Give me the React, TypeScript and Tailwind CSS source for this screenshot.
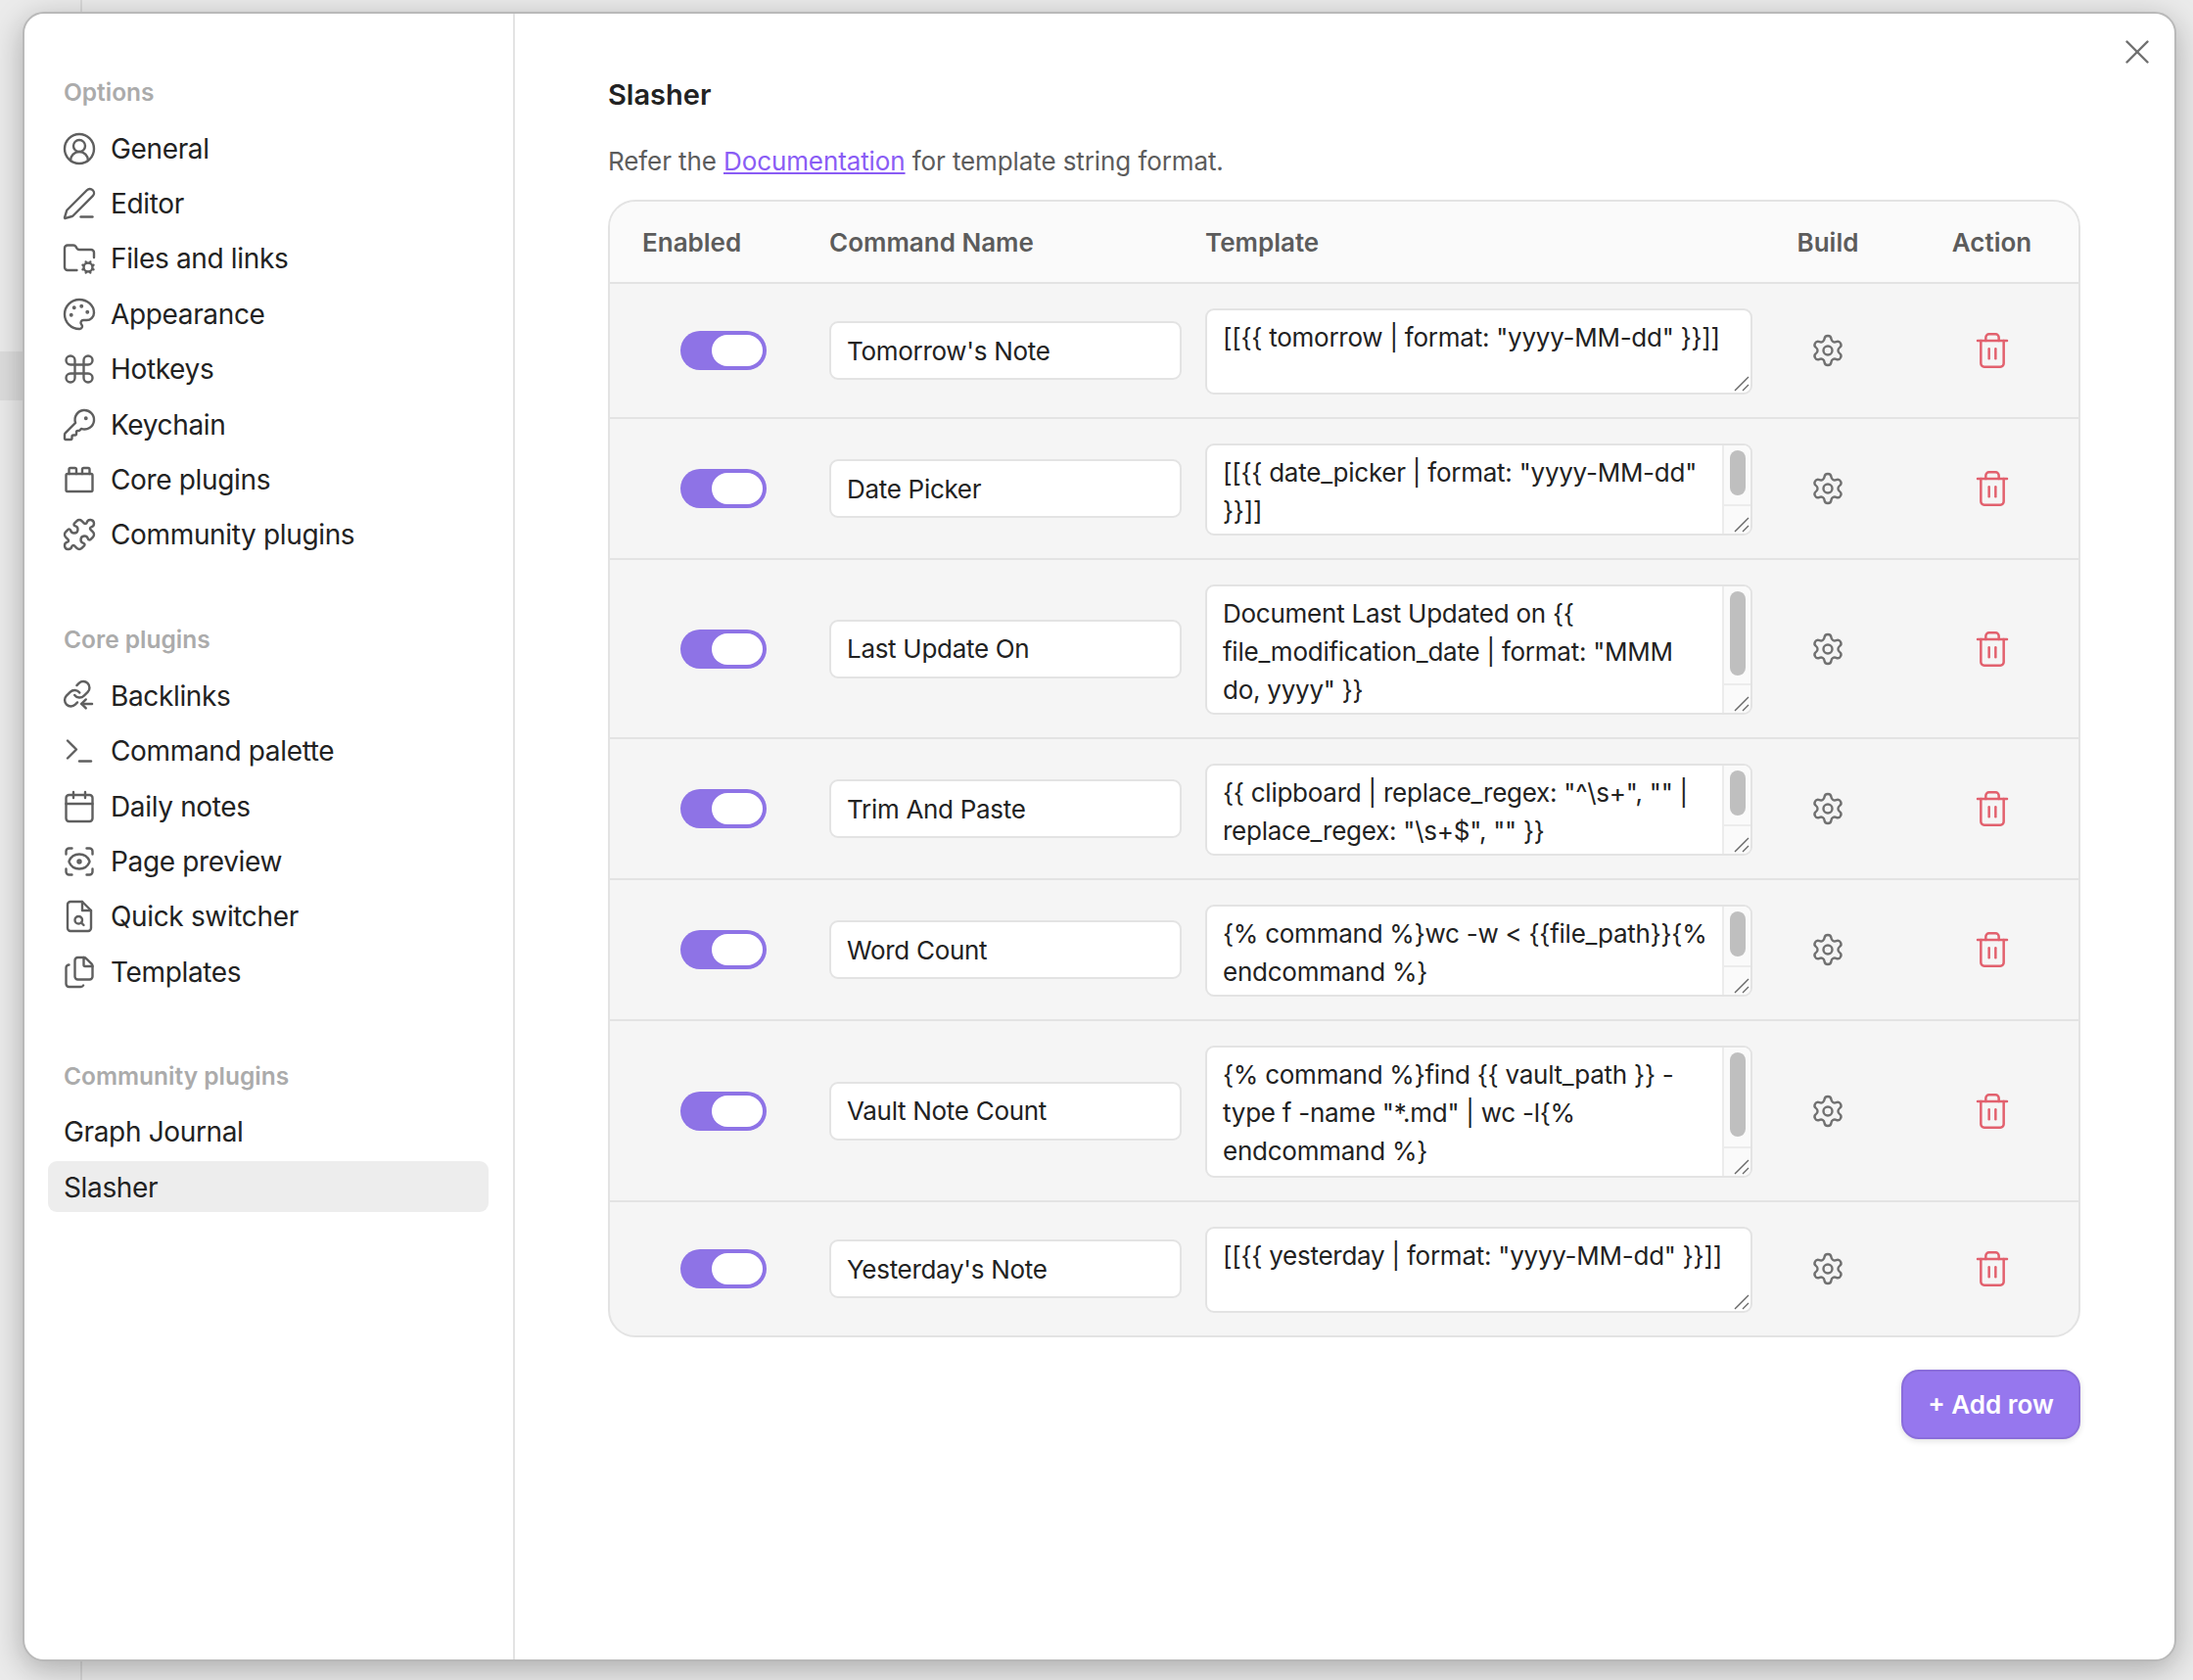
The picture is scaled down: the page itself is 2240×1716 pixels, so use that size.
import {
  CircleUserRound, PenLine, FolderCog, Palette, Command, KeyRound, ToyBrick, Puzzle,
  Terminal, Calendar, ScanEye, Files, Settings, Trash2, X,
} from "lucide-react";
import type { ReactNode } from "react";

function BacklinksIcon() {
  return (
    <svg width="36" height="36" viewBox="0 0 24 24" fill="none" stroke="currentColor" strokeWidth="1.6" strokeLinecap="round" strokeLinejoin="round">
      <g transform="translate(0.3 0.3) scale(0.85)">
        <path d="M10 13a5 5 0 0 0 7.54.54l3-3a5 5 0 0 0-7.07-7.07l-1.72 1.71" strokeWidth="1.9" />
        <path d="M14 11a5 5 0 0 0-7.54-.54l-3 3a5 5 0 0 0 7.07 7.07l1.71-1.71" strokeWidth="1.9" />
      </g>
      <path d="M20.7 17.3h-7.2" />
      <path d="m16.5 14.3-3 3 3 3" />
    </svg>
  );
}

function QuickSwitcherIcon() {
  return (
    <svg width="36" height="36" viewBox="0 0 24 24" fill="none" stroke="currentColor" strokeWidth="1.6" strokeLinecap="round" strokeLinejoin="round">
      <path d="M14 2H6a2 2 0 0 0-2 2v16a2 2 0 0 0 2 2h12a2 2 0 0 0 2-2V8z" />
      <path d="M14 2v6h6" />
      <circle cx="11.5" cy="14.5" r="2.5" />
      <path d="M13.3 16.3 15 18" />
    </svg>
  );
}

const ic = { size: 36, strokeWidth: 1.6 };

type NavItem = { label: string; icon?: ReactNode; active?: boolean };

const options: NavItem[] = [
  { label: "General", icon: <CircleUserRound {...ic} /> },
  { label: "Editor", icon: <PenLine {...ic} /> },
  { label: "Files and links", icon: <FolderCog {...ic} /> },
  { label: "Appearance", icon: <Palette {...ic} /> },
  { label: "Hotkeys", icon: <Command {...ic} /> },
  { label: "Keychain", icon: <KeyRound {...ic} /> },
  { label: "Core plugins", icon: <ToyBrick {...ic} /> },
  { label: "Community plugins", icon: <Puzzle {...ic} /> },
];
const core: NavItem[] = [
  { label: "Backlinks", icon: <BacklinksIcon /> },
  { label: "Command palette", icon: <Terminal {...ic} /> },
  { label: "Daily notes", icon: <Calendar {...ic} /> },
  { label: "Page preview", icon: <ScanEye {...ic} /> },
  { label: "Quick switcher", icon: <QuickSwitcherIcon /> },
  { label: "Templates", icon: <Files {...ic} /> },
];
const community: NavItem[] = [
  { label: "Graph Journal" },
  { label: "Slasher", active: true },
];

function NavGroup({ title, items, className, headClass }: { title: string; items: NavItem[]; className?: string; headClass: string }) {
  return (
    <div className={className}>
      <div className={`h-[40px] pl-[16px] flex items-center text-[24.5px] font-semibold text-[#ababab] ${headClass}`}>{title}</div>
      {items.map((it) => (
        <div key={it.label} className="h-[56.4px] py-[2px]">
          <div className={`h-full pt-[1px] flex items-center rounded-[9px] text-[28px] tracking-[-0.35px] text-[#222222] ${it.active ? "bg-[#ededed]" : ""} ${it.icon ? "pl-[14px] gap-[14px]" : "pl-[16px]"}`}>
            {it.icon ? <span className="w-[36px] h-[36px] flex items-center justify-center text-[#5f5f5f]">{it.icon}</span> : null}
            <span>{it.label}</span>
          </div>
        </div>
      ))}
    </div>
  );
}

type Row = { name: string; lines: string[]; taClass: string; thumbClass?: string };

const rows: Row[] = [
  { name: "Tomorrow's Note", lines: ['[[{{ tomorrow | format: "yyyy-MM-dd" }}]]'], taClass: "h-[88px]" },
  { name: "Date Picker", lines: ['[[{{ date_picker | format: "yyyy-MM-dd"', "}}]]"], taClass: "h-[94px]", thumbClass: "h-[46px]" },
  { name: "Last Update On", lines: ["Document Last Updated on {{", 'file_modification_date | format: "MMM', 'do, yyyy" }}'], taClass: "h-[133px]", thumbClass: "h-[86px]" },
  { name: "Trim And Paste", lines: ['{{ clipboard | replace_regex: "^\\s+", "" |', 'replace_regex: "\\s+$", "" }}'], taClass: "h-[94px]", thumbClass: "h-[46px]" },
  { name: "Word Count", lines: ["{% command %}wc -w < {{file_path}}{%", "endcommand %}"], taClass: "h-[94px]", thumbClass: "h-[46px]" },
  { name: "Vault Note Count", lines: ["{% command %}find {{ vault_path }} -", 'type f -name "*.md" | wc -l{%', "endcommand %}"], taClass: "h-[135px]", thumbClass: "h-[86px]" },
  { name: "Yesterday's Note", lines: ['[[{{ yesterday | format: "yyyy-MM-dd" }}]]'], taClass: "h-[88px]" },
];

function Grip({ className }: { className: string }) {
  return (
    <svg className={className} width="16" height="16" viewBox="0 0 16 16" fill="none" stroke="#666666" strokeWidth="1.3">
      <path d="M1 15 15 1" />
      <path d="M9 15 15 9" />
    </svg>
  );
}

function TemplateBox({ row }: { row: Row }) {
  return (
    <div className={`${row.taClass} relative flex rounded-[9px] border-2 border-[#e3e3e3] bg-white overflow-hidden`}>
      <div className="flex-1 min-w-0 pl-[16px] pt-[8px] text-[26px] tracking-[-0.25px] leading-[39px] text-[#222222] whitespace-nowrap">
        {row.lines.map((l) => (
          <div key={l}>{l}</div>
        ))}
      </div>
      {row.thumbClass ? (
        <div className="w-[29px] shrink-0 flex flex-col bg-[#fafafa] border-l-2 border-[#ececec]">
          <div className="flex-1 min-h-0 pt-[5px] pl-[6px]">
            <div className={`${row.thumbClass} w-[16px] rounded-full bg-[#bfbfbf]`} />
          </div>
          <div className="h-[30px] shrink-0 relative border-t-2 border-[#ececec]">
            <Grip className="absolute right-[1px] bottom-[1px]" />
          </div>
        </div>
      ) : (
        <Grip className="absolute right-[1px] bottom-[1px]" />
      )}
    </div>
  );
}

export default function App() {
  return (
    <div className="relative w-[2240px] h-[1716px] overflow-hidden bg-[#ebebeb] pl-[23px] pt-[12px] font-['Inter',sans-serif]">
      <div className="absolute left-[82px] top-0 w-[2px] h-full bg-[#d8d8d8]" />
      <div className="absolute left-0 top-[359px] w-[24px] h-[50px] bg-[#dddddd]" />
      <div className="relative flex w-[2200px] h-[1685px] rounded-[22px] border-2 border-[#b9b9b9] bg-white shadow-[0_8px_32px_rgba(0,0,0,0.28)]">
        <aside className="w-[501px] shrink-0 border-r-2 border-[#e3e3e3] pl-[24px] pr-[25px] pt-[60px]">
          <NavGroup title="Options" items={options} headClass="mb-[9px]" />
          <NavGroup title="Core plugins" items={core} className="mt-[59px]" headClass="mb-[9px]" />
          <NavGroup title="Community plugins" items={community} className="mt-[59px]" headClass="mb-[8px]" />
        </aside>
        <main className="flex-1 min-w-0 pl-[95px] pr-[96px] pt-[64px]">
          <h1 className="h-[38px] leading-[38px] text-[29px] font-semibold text-[#222222]">Slasher</h1>
          <p className="mt-[29px] h-[40px] leading-[40px] text-[26px] tracking-[-0.1px] text-[#5c5c5c]">
            Refer the <a className="text-[#8a5cf5] underline">Documentation</a> for template string format.
          </p>
          <div className="mt-[19px] rounded-[28px] border-2 border-[#e3e3e3] overflow-hidden bg-[#f5f5f5]">
            <div className="grid grid-cols-[224px_384px_559px_154px_1fr] items-center h-[84px] bg-[#fafafa] border-b-2 border-[#e3e3e3] text-[26px] font-semibold text-[#5c5c5c]">
              <div className="pl-[33px]">Enabled</div>
              <div>Command Name</div>
              <div>Template</div>
              <div className="text-center">Build</div>
              <div className="text-center pl-[2px]">Action</div>
            </div>
            {rows.map((row, i) => (
              <div
                key={row.name}
                className={`grid grid-cols-[224px_384px_559px_154px_1fr] items-center pt-[25px] pb-[23px] ${i < rows.length - 1 ? "border-b-2 border-[#e3e3e3]" : ""}`}
              >
                <div className="pl-[72px] mb-[2px]">
                  <div className="w-[88px] h-[40px] rounded-full bg-[#8e73e6] flex items-center justify-end pr-[4px]">
                    <div className="w-[52px] h-[32px] rounded-full bg-white" />
                  </div>
                </div>
                <div className="w-[360px] h-[60px] mb-[2px] rounded-[9px] border-2 border-[#e3e3e3] bg-white flex items-center pl-[16px] text-[26px] tracking-[-0.3px] text-[#222222]">
                  {row.name}
                </div>
                <TemplateBox row={row} />
                <div className="flex justify-center mb-[2px] text-[#707070]">
                  <Settings size={36} strokeWidth={1.6} />
                </div>
                <div className="flex justify-center mb-[2px] pl-[2px] text-[#e2616e]">
                  <Trash2 size={40} strokeWidth={1.5} />
                </div>
              </div>
            ))}
          </div>
          <div className="mt-[33px] flex justify-end">
            <button className="w-[183px] h-[71px] rounded-[18px] bg-[#9677ee] border-2 border-[#8a6ddb] shadow-[0_2px_6px_rgba(0,0,0,0.12)] text-[26px] font-semibold text-white">
              + Add row
            </button>
          </div>
        </main>
        <button className="absolute right-[17px] top-[18px] text-[#707070]">
          <X size={42} strokeWidth={1.4} />
        </button>
      </div>
    </div>
  );
}
